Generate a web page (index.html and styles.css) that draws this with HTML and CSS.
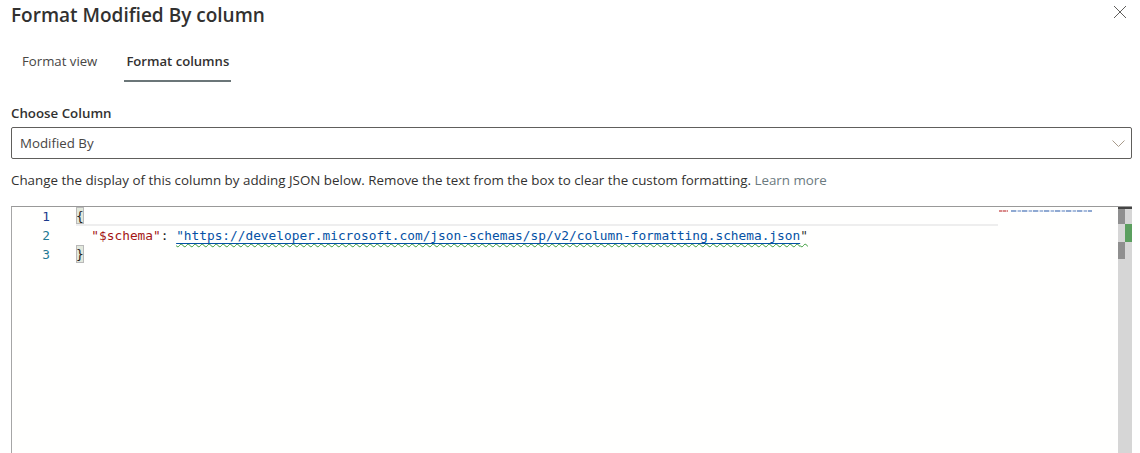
FILE: index.html
```html
<!DOCTYPE html>
<html lang="en">
<head>
<meta charset="utf-8">
<title>Format Modified By column</title>
<link rel="stylesheet" href="styles.css">
</head>
<body>
<div class="panel">
  <header class="head">
    <h1 class="title">Format Modified By column</h1>
    <svg class="close" width="12" height="12" viewBox="0 0 12 12"><path d="M0 0L12 12M12 0L0 12" stroke="#605e5c" stroke-width="1" fill="none"/></svg>
  </header>
  <nav class="tabs">
    <div class="tab">Format view</div>
    <div class="tab active">Format columns</div>
  </nav>
  <div class="label">Choose Column</div>
  <div class="select">
    <span>Modified By</span>
    <svg class="chev" width="13" height="7" viewBox="0 0 13 7"><path d="M0.5 0.5L6.5 6.5L12.5 0.5" stroke="#a89a8a" stroke-width="1" fill="none"/></svg>
  </div>
  <p class="desc">Change the display of this column by adding JSON below. Remove the text from the box to clear the custom formatting. <span class="learn">Learn more</span></p>
  <div class="editor">
    <div class="gutter">
      <div class="num n1">1</div>
      <div class="num n2">2</div>
      <div class="num n3">3</div>
    </div>
    <div class="code">
      <div class="line current"><span class="brace">{</span></div>
      <div class="line"><span class="indent"></span><span class="key">"$schema"</span><span class="punct">: </span><span class="squiggle"><span class="url">"https://developer.microsoft.com/json-schemas/sp/v2/column-formatting.schema.json</span>"</span></div>
      <div class="line"><span class="brace">}</span></div>
    </div>
    <div class="minimap">
      <div class="mini-row"><i class="mini-red"></i><i class="mini-blue"></i></div>
    </div>
    <div class="overview">
      <div class="ov-top"></div>
      <div class="ov-a"></div>
      <div class="ov-b"></div>
      <div class="ov-a ov-c"></div>
    </div>
  </div>
</div>
</body>
</html>
```
FILE: styles.css
```css
* { box-sizing: border-box; }
html, body { margin: 0; height: 100%; background: #fff; overflow: hidden; }
body { font-family: "Open Sans", "Noto Sans", sans-serif; color: #323130; }
.panel { height: 453px; padding: 0 8px 0 11px; display: flex; flex-direction: column; }
.head { display: flex; justify-content: space-between; align-items: flex-start; height: 37px; }
.title { margin: 2px 0 0; font-size: 19px; line-height: 26px; font-weight: 600; color: #323130; }
.close { margin: 6px 6px 0 0; }
.tabs { display: flex; height: 45px; }
.tab { margin: 0 0 0 9px; padding: 14px 2px 0; font-size: 13.2px; line-height: 20px; color: #484644; }
.tab.active { margin: 0 0 0 25px; padding: 14px 0 0; width: 107px; text-align: center; font-size: 13.1px; font-weight: 600; color: #323130; border-bottom: 2px solid #6b7678; height: 45px; }
.label { margin-top: 22px; font-size: 13.3px; line-height: 18px; font-weight: 600; color: #323130; }
.select { margin-top: 5px; height: 32px; border: 1px solid #605e5c; border-radius: 2px; padding: 0 6px 0 8px; display: flex; justify-content: space-between; align-items: center; font-size: 13.3px; color: #484644; }
.desc { margin: 11px 0 0; font-size: 13.37px; line-height: 20px; color: #323130; white-space: nowrap; }
.learn { color: #6b7a80; }
.editor { margin-top: 16px; flex: 1; display: flex; border-style: solid; border-width: 1px 1px 0 1px; border-color: #999 #a6a6a6; background: #fffffe; min-height: 0; }
.gutter { width: 64px; flex: none; padding-right: 26px; font: 12.8px/19px "DejaVu Sans Mono", monospace; }
.num { text-align: right; height: 19px; }
.n1 { color: #1b3a8c; }
.n2 { color: #237893; }
.n3 { color: #237893; }
.code { width: 922px; flex: none; font: 12.8px/19px "DejaVu Sans Mono", monospace; color: #333; }
.line { height: 19px; white-space: pre; }
.line.current { border-bottom: 2px solid #eee; }
.brace { display: inline-block; width: 8px; height: 17px; line-height: 17px; background: #e2e8dc; outline: 1px solid #b9b9b9; outline-offset: -1px; color: #222; vertical-align: top; }
.line:last-child .brace { height: 18px; }
.indent { display: inline-block; width: 15.36px; }
.key { color: #a31515; }
.punct { color: #222; }
.squiggle { text-decoration: underline wavy #3a9a3a 1px; text-underline-offset: 3px; text-decoration-skip-ink: none; }
.url { color: #0451a5; text-decoration: underline solid #0451a5 1px; text-underline-offset: 3px; text-decoration-skip-ink: none; }
.minimap { width: 120px; flex: none; padding-top: 3px; }
.mini-row { display: flex; gap: 3px; padding-left: 1px; height: 2px; }
.mini-red { width: 9px; height: 2px; background: repeating-linear-gradient(90deg, #d98a8a 0 3px, #f0caca 3px 4px); }
.mini-blue { width: 81px; height: 2px; background: repeating-linear-gradient(90deg, #8fa9d2 0 5px, #dbe4f2 5px 7px, #a9bddd 7px 10px, #eef2f8 10px 11px); }
.overview { width: 14px; flex: none; background: #d6d6d6; display: flex; flex-direction: column; }
.ov-top { height: 2px; background: #444; }
.ov-a { width: 7px; height: 15px; background: #8f8f8f; }
.ov-b { width: 7px; height: 18px; margin-left: 7px; background: #5b9f5f; }
.ov-c { height: 17px; }
```
